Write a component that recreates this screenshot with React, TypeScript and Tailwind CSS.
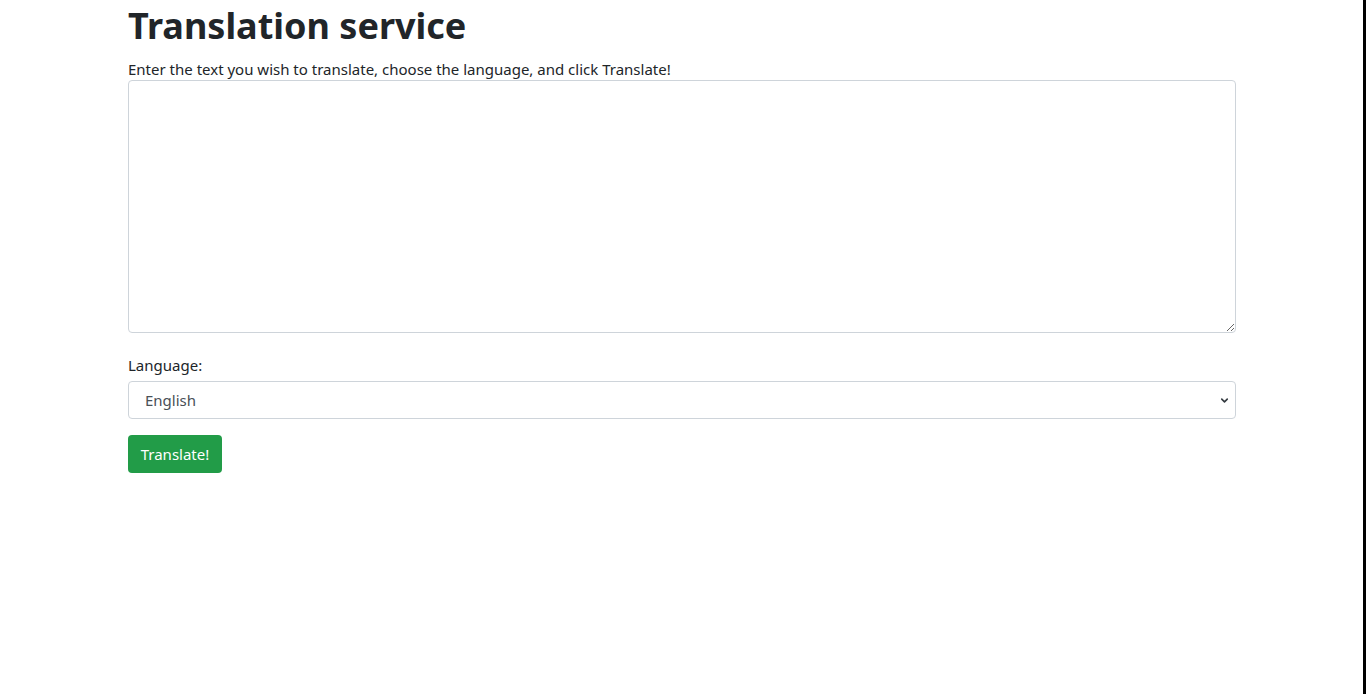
import { ChevronDown } from 'lucide-react'

export default function App() {
  return (
    <div
      className="flex h-[694px] w-full bg-white text-[#212529]"
      style={{ fontFamily: '"Noto Sans", "Open Sans", Arial, sans-serif' }}
    >
      <main className="flex-1 min-w-0">
        <div className="mx-auto w-[1139px] pl-[16px] pr-[15px]">
          <h1 className="text-[36px] font-bold leading-[52px] mb-[6px]">Translation service</h1>
          <p className="text-[15px] leading-[22px]">
            Enter the text you wish to translate, choose the language, and click Translate!
          </p>
          <textarea className="block w-full h-[253px] rounded border border-[#ced4da] px-3 py-1.5 text-base outline-none resize-y" />
          <label className="block mt-[20px] mb-[4px] text-[15px] leading-6">Language:</label>
          <div className="relative">
            <select className="block w-full h-[38px] appearance-none rounded border border-[#ced4da] bg-white pl-4 pr-8 text-[15px] text-[#495057] outline-none">
              <option>English</option>
            </select>
            <ChevronDown
              className="absolute right-[6px] top-[14px] w-[11px] h-[11px] text-[#343a40] pointer-events-none"
              strokeWidth={3.5}
            />
          </div>
          <button className="mt-4 h-[38px] w-[94px] rounded bg-[#229c48] text-[15px] text-white">Translate!</button>
        </div>
      </main>
      <div className="w-[3px] shrink-0 bg-black" />
    </div>
  )
}
